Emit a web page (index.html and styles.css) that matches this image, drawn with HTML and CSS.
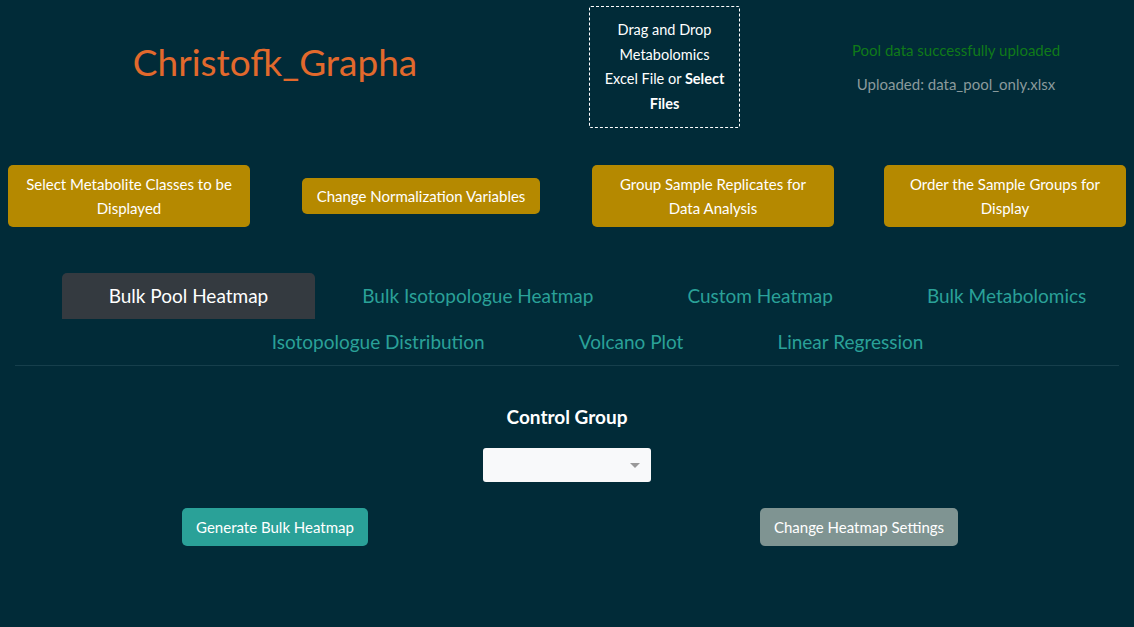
FILE: index.html
```html
<!DOCTYPE html>
<html>
<head>
<meta charset="utf-8">
<link rel="stylesheet" href="styles.css">
</head>
<body>
<div class="page">
  <header class="top">
    <div class="title-col"><h1 class="title">Christofk_Grapha</h1></div>
    <div class="upload-col">
      <div class="dropzone">Drag and Drop<br>Metabolomics<br>Excel File or <b>Select</b><br><b>Files</b></div>
    </div>
    <div class="status-col">
      <div class="ok">Pool data successfully uploaded</div>
      <div class="file">Uploaded: data_pool_only.xlsx</div>
    </div>
  </header>

  <div class="actions">
    <div class="cell"><button class="btn gold full">Select Metabolite Classes to be Displayed</button></div>
    <div class="cell"><button class="btn gold wide">Change Normalization Variables</button></div>
    <div class="cell"><button class="btn gold full">Group Sample Replicates for Data Analysis</button></div>
    <div class="cell"><button class="btn gold full">Order the Sample Groups for Display</button></div>
  </div>

  <nav class="tabs">
    <span class="tab active">Bulk Pool Heatmap</span>
    <span class="tab">Bulk Isotopologue Heatmap</span>
    <span class="tab">Custom Heatmap</span>
    <span class="tab">Bulk Metabolomics</span>
    <span class="tab">Isotopologue Distribution</span>
    <span class="tab">Volcano Plot</span>
    <span class="tab">Linear Regression</span>
  </nav>
  <div class="divider"></div>

  <section class="panel">
    <div class="label">Control Group</div>
    <div class="select"><span class="caret"></span></div>
    <div class="bottom">
      <div class="bcol"><button class="btn teal">Generate Bulk Heatmap</button></div>
      <div class="bcol"><button class="btn gray">Change Heatmap Settings</button></div>
    </div>
  </section>
</div>
</body>
</html>
```

FILE: styles.css
```css
* { box-sizing: border-box; }
html, body {
  margin: 0;
  padding: 0;
  background: #012b38;
  font-family: "Lato", "Open Sans", sans-serif;
  color: #ffffff;
  width: 1134px;
  height: 627px;
  overflow: hidden;
}
.page { width: 1134px; }

.top {
  display: grid;
  grid-template-columns: 550px 228px 356px;
  height: 134px;
  padding-top: 6px;
}
.title-col { display: flex; justify-content: center; padding-top: 34px; }
.title {
  margin: 0;
  font-weight: 400;
  font-size: 37px;
  line-height: 44px;
  color: #e2692c;
}
.upload-col { display: flex; justify-content: flex-start; padding-left: 39px; }
.dropzone {
  width: 151px;
  height: 122px;
  border: 1px dashed #ffffff;
  border-radius: 2px;
  text-align: center;
  font-size: 14.5px;
  line-height: 24.7px;
  padding: 11px 4px 0;
  white-space: nowrap;
}
.dropzone b { font-weight: 700; }
.status-col {
  display: flex;
  flex-direction: column;
  align-items: center;
  padding-top: 33px;
  font-size: 15px;
}
.ok { color: #107a18; line-height: 22px; }
.file { color: #8a9a9c; line-height: 22px; margin-top: 12px; }

.actions {
  display: grid;
  grid-template-columns: repeat(4, 242px);
  column-gap: 50px;
  padding: 31px 0 0 8px;
}
.cell { display: flex; justify-content: center; align-items: center; height: 62px; }
.btn {
  font-family: inherit;
  font-size: 15px;
  line-height: 24px;
  color: #ffffff;
  border: none;
  border-radius: 5px;
  padding: 6px 12px;
  cursor: pointer;
}
.btn.full { width: 242px; height: 62px; padding: 7px 14px; }
.btn.wide { padding: 6px 15px; }
.gold { background: #b58900; }
.teal { background: #2aa198; }
.gray { background: #7f9492; }

.tabs {
  margin-top: 46px;
  padding-left: 61px;
  display: flex;
  flex-wrap: wrap;
  justify-content: center;
}
.tab {
  padding: 0 47px;
  height: 46px;
  line-height: 46px;
  font-size: 19px;
  color: #2aa198;
  border-radius: 5px 5px 0 0;
}
.tab.active { background: #343a40; color: #ffffff; }
.divider {
  margin: 0 15px;
  height: 1px;
  background: #163f4c;
}

.panel { display: flex; flex-direction: column; align-items: center; }
.label {
  margin-top: 38px;
  font-size: 19px;
  font-weight: 700;
  line-height: 26px;
}
.select {
  margin-top: 18px;
  width: 168px;
  height: 34px;
  background: #f8f9fa;
  border-radius: 3px;
  position: relative;
}
.caret {
  position: absolute;
  right: 11px;
  top: 15px;
  width: 0;
  height: 0;
  border-left: 5px solid transparent;
  border-right: 5px solid transparent;
  border-top: 5px solid #999999;
}
.bottom {
  margin-top: 26px;
  width: 1134px;
  display: grid;
  grid-template-columns: 550px 550px;
  column-gap: 34px;
}
.bcol { display: flex; justify-content: center; }
.bottom .btn { height: 38px; padding: 6px 14px; }
```
